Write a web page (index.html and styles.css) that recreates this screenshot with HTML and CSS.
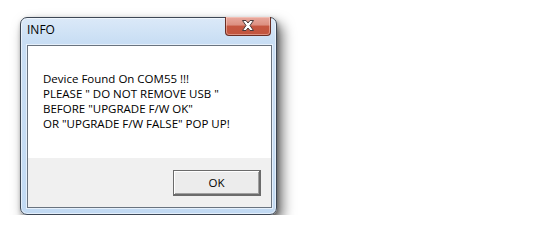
FILE: index.html
```html
<!DOCTYPE html>
<html>
<head>
<meta charset="utf-8">
<link rel="stylesheet" href="styles.css">
</head>
<body>
<div class="stage">
  <div class="window">
    <div class="titlebar">
      <span class="title">INFO</span>
      <div class="close">
        <svg width="14" height="11" viewBox="0 0 14 11">
          <path d="M1.5 0.5 H5 L7 3 L9 0.5 H12.5 L9 5.5 L12.5 10.5 H9 L7 8 L5 10.5 H1.5 L5 5.5 Z" fill="#fff" stroke="#4a3a3a" stroke-width="1" stroke-linejoin="round"/>
        </svg>
      </div>
    </div>
    <div class="client">
      <div class="message">
        <p>Device Found On COM55 !!!</p>
        <p>PLEASE " DO NOT REMOVE USB "</p>
        <p>BEFORE "UPGRADE F/W OK"</p>
        <p>OR "UPGRADE F/W FALSE" POP UP!</p>
      </div>
      <div class="footer">
        <button class="ok">OK</button>
      </div>
    </div>
  </div>
</div>
</body>
</html>
```
FILE: styles.css
```css
html, body {
  margin: 0;
  padding: 0;
  background: #ffffff;
}
.stage {
  padding: 17px 0 0 20px;
}
.window {
  position: relative;
  box-sizing: border-box;
  width: 257px;
  height: 198px;
  border: 1px solid #3d4755;
  border-radius: 7px;
  background: linear-gradient(180deg, #dbe9f8 0%, #c9def4 12%, #c2daf3 100%);
  box-shadow: 5px 7px 13px rgba(0, 0, 0, 0.6), 1px 2px 4px rgba(0, 0, 0, 0.3), inset 0 0 0 1px rgba(255, 255, 255, 0.55);
  display: flex;
  flex-direction: column;
}
.titlebar {
  height: 27px;
  display: flex;
  align-items: center;
  padding-left: 6px;
}
.title {
  font-family: "Open Sans", "Liberation Sans", sans-serif;
  font-size: 12px;
  color: #000;
  margin-top: -4px;
}
.close {
  position: absolute;
  top: -1px;
  right: 5px;
  width: 46px;
  height: 19px;
  box-sizing: border-box;
  border: 1px solid #6a2e24;
  border-top: none;
  border-radius: 0 0 4px 4px;
  background: linear-gradient(180deg, #e9a99e 0%, #dc8f80 45%, #c65640 50%, #c2553e 100%);
  box-shadow: inset 0 0 0 1px rgba(255, 220, 210, 0.45);
  display: flex;
  align-items: center;
  justify-content: center;
}
.close svg {
  display: block;
  margin-top: -1px;
}
.client {
  margin: 0 4px 0 6px;
  height: 163px;
  box-sizing: border-box;
  border: 1px solid #69737f;
  box-shadow: 0 0 0 1px #e6f0fb;
  display: flex;
  flex-direction: column;
}
.message {
  height: 112px;
  box-sizing: border-box;
  background: #ffffff;
  padding: 25px 0 0 15px;
  font-family: "Open Sans", "Liberation Sans", sans-serif;
  font-size: 11.5px;
  line-height: 15px;
  color: #000;
}
.message p {
  margin: 0;
  white-space: nowrap;
}
.footer {
  flex: 1;
  background: #f0f0f0;
  display: flex;
  justify-content: flex-end;
  align-items: flex-start;
  padding: 12px 10px 0 0;
}
.ok {
  width: 88px;
  height: 26px;
  box-sizing: border-box;
  border: 1px solid #6b6b6b;
  border-right-width: 2px;
  border-bottom-width: 2px;
  background: #ececec;
  box-shadow: inset 1px 1px 0 #ffffff, inset -1px -1px 0 #a0a0a0;
  font-family: "Open Sans", "Liberation Sans", sans-serif;
  font-size: 11.5px;
  color: #000;
  padding: 0;
}
```
